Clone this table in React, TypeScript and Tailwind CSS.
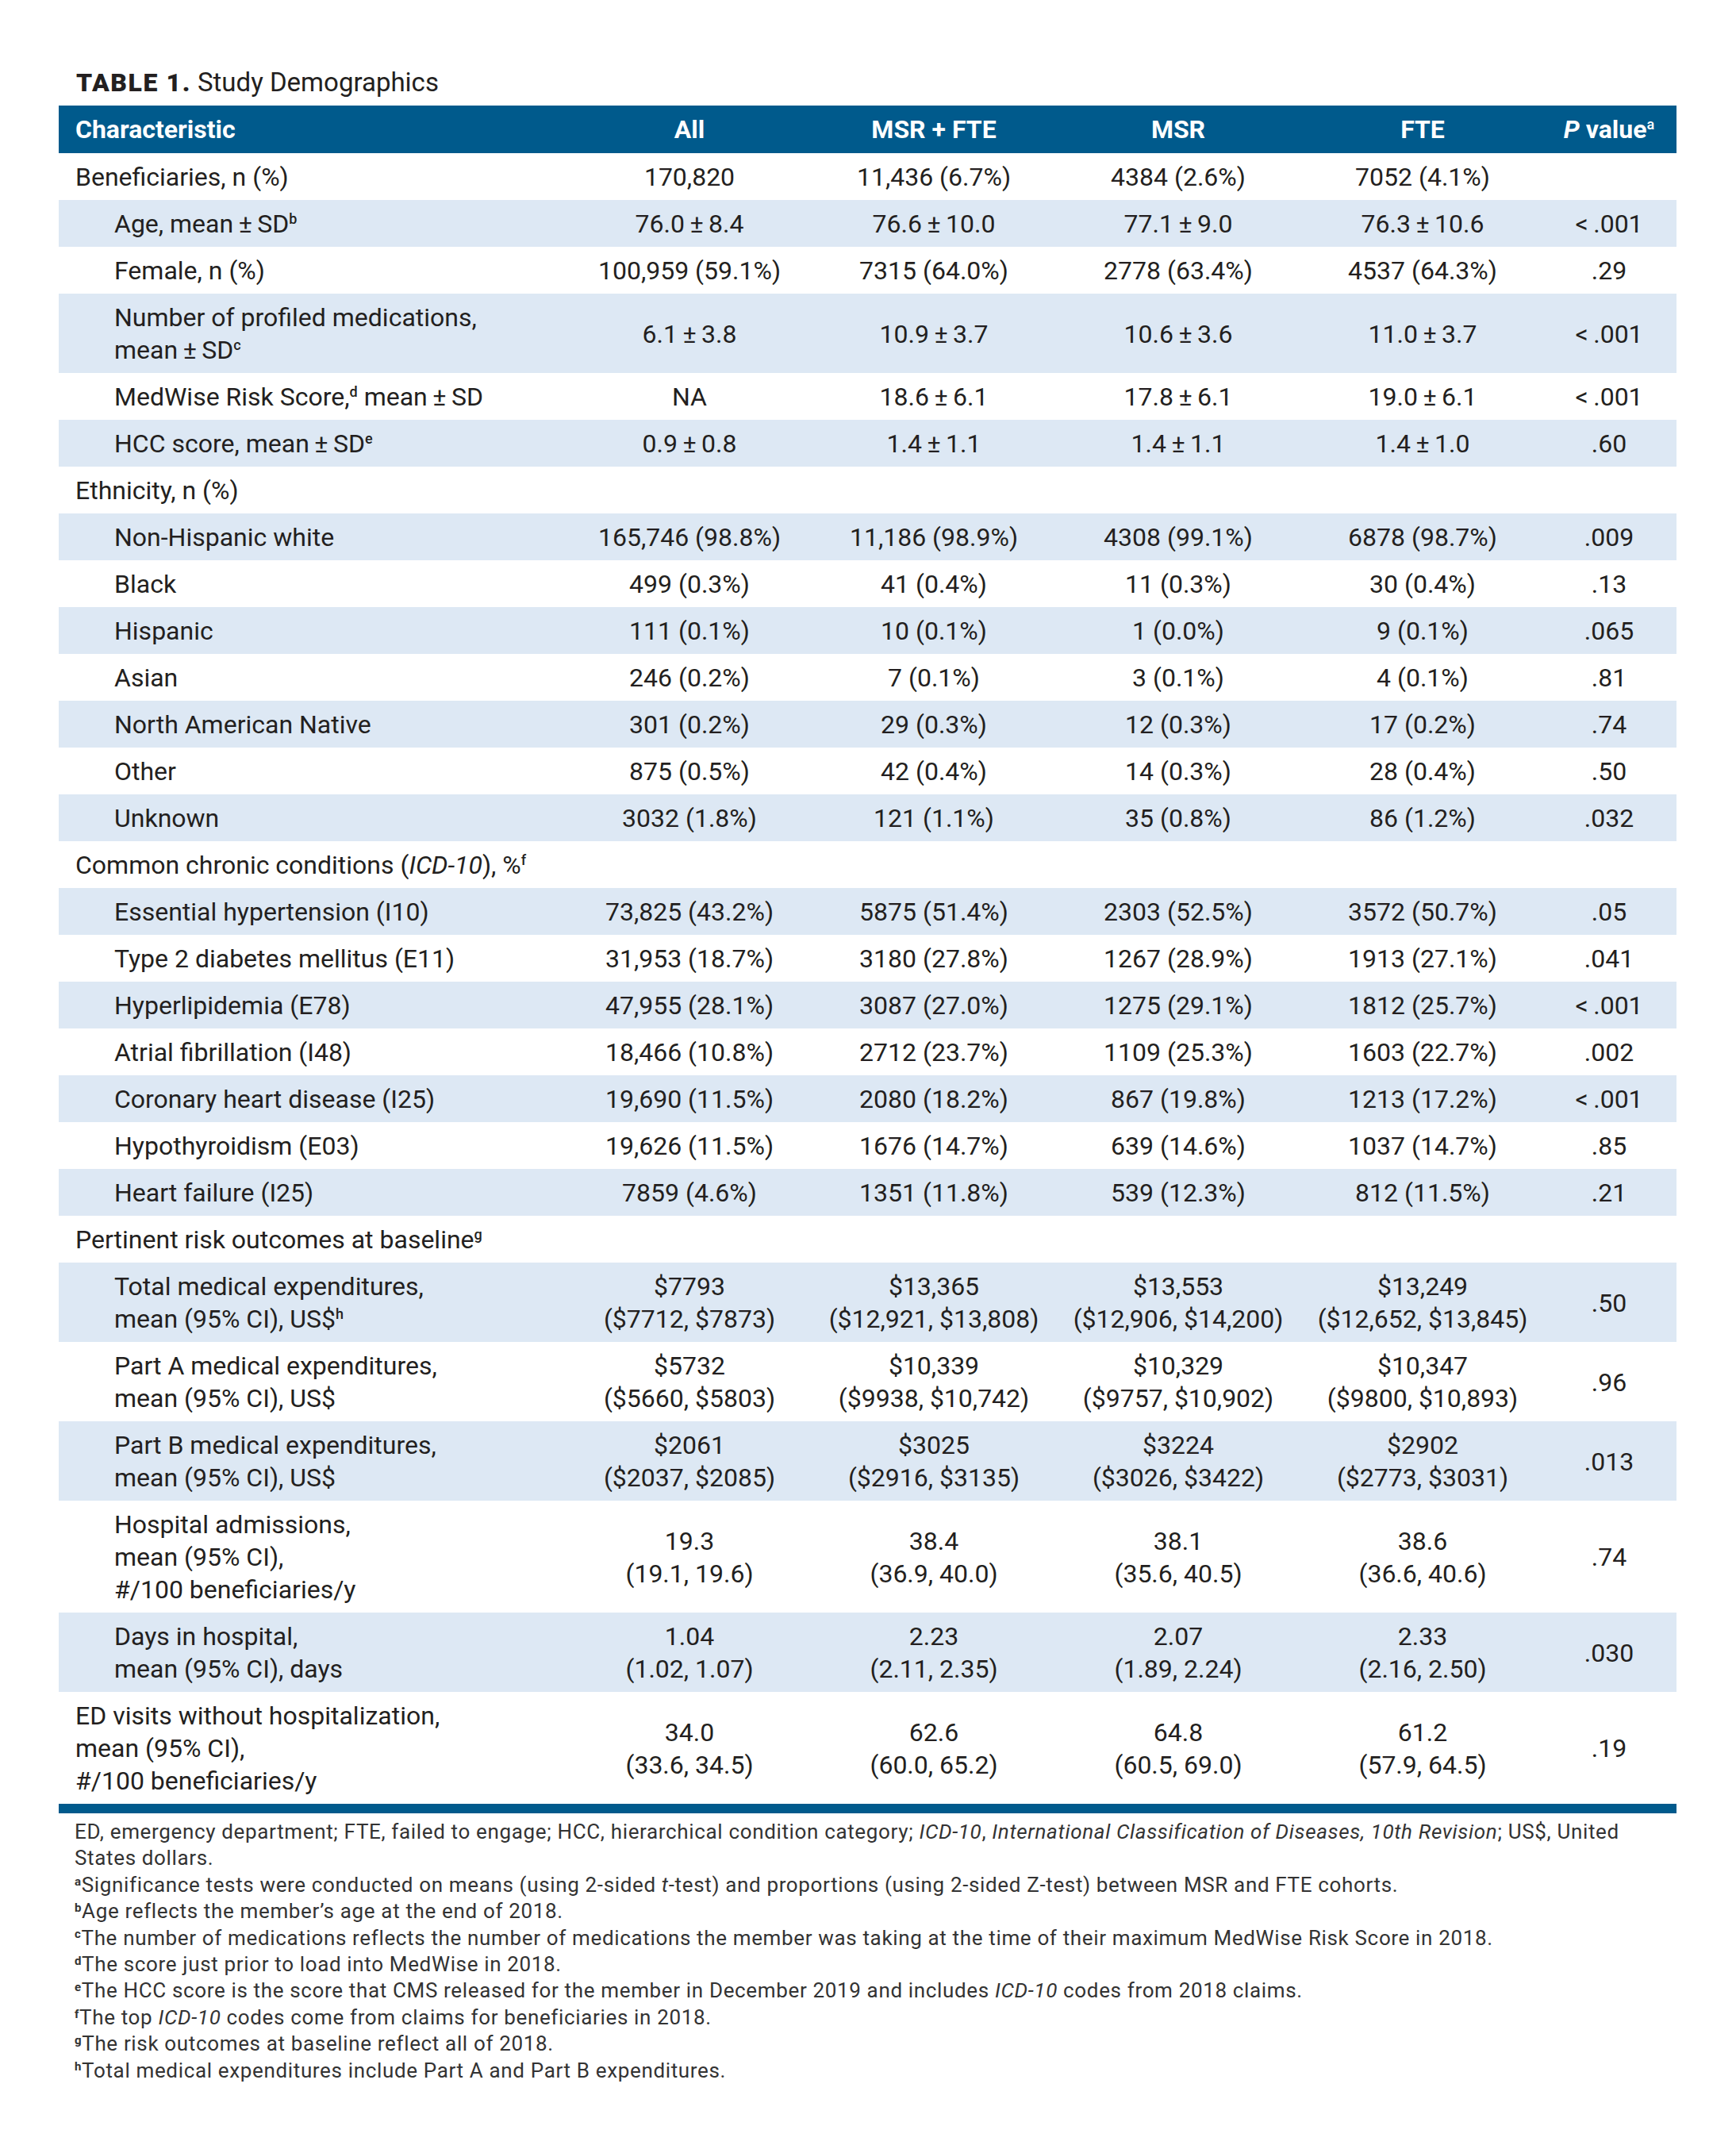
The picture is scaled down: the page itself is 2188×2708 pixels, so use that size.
import React from "react";

type Cell = string | string[];
type RowData = {
  label: React.ReactNode;
  sub?: boolean;
  vals?: Cell[];
  p?: string;
};

const Sup = ({ children }: { children: React.ReactNode }) => (
  <sup className="top-[-0.62em] text-[18px] font-medium">{children}</sup>
);

const FnSup = ({ children }: { children: React.ReactNode }) => (
  <sup className="top-[-0.55em] text-[15px] font-bold">{children}</sup>
);

const pm = (a: string, b: string) => `${a}\u2009±\u2009${b}`;

const rows: RowData[] = [
  { label: "Beneficiaries, n (%)", vals: ["170,820", "11,436 (6.7%)", "4384 (2.6%)", "7052 (4.1%)"], p: "" },
  {
    label: (
      <>
        Age, mean{"\u2009±\u2009"}SD<Sup>b</Sup>
      </>
    ),
    sub: true,
    vals: [pm("76.0", "8.4"), pm("76.6", "10.0"), pm("77.1", "9.0"), pm("76.3", "10.6")],
    p: "<\u2009.001",
  },
  { label: "Female, n (%)", sub: true, vals: ["100,959 (59.1%)", "7315 (64.0%)", "2778 (63.4%)", "4537 (64.3%)"], p: ".29" },
  {
    label: (
      <>
        Number of profiled medications,
        <br />
        mean{"\u2009±\u2009"}SD<Sup>c</Sup>
      </>
    ),
    sub: true,
    vals: [pm("6.1", "3.8"), pm("10.9", "3.7"), pm("10.6", "3.6"), pm("11.0", "3.7")],
    p: "<\u2009.001",
  },
  {
    label: (
      <>
        MedWise Risk Score,<Sup>d</Sup> mean{"\u2009±\u2009"}SD
      </>
    ),
    sub: true,
    vals: ["NA", pm("18.6", "6.1"), pm("17.8", "6.1"), pm("19.0", "6.1")],
    p: "<\u2009.001",
  },
  {
    label: (
      <>
        HCC score, mean{"\u2009±\u2009"}SD<Sup>e</Sup>
      </>
    ),
    sub: true,
    vals: [pm("0.9", "0.8"), pm("1.4", "1.1"), pm("1.4", "1.1"), pm("1.4", "1.0")],
    p: ".60",
  },
  { label: "Ethnicity, n (%)" },
  { label: "Non-Hispanic white", sub: true, vals: ["165,746 (98.8%)", "11,186 (98.9%)", "4308 (99.1%)", "6878 (98.7%)"], p: ".009" },
  { label: "Black", sub: true, vals: ["499 (0.3%)", "41 (0.4%)", "11 (0.3%)", "30 (0.4%)"], p: ".13" },
  { label: "Hispanic", sub: true, vals: ["111 (0.1%)", "10 (0.1%)", "1 (0.0%)", "9 (0.1%)"], p: ".065" },
  { label: "Asian", sub: true, vals: ["246 (0.2%)", "7 (0.1%)", "3 (0.1%)", "4 (0.1%)"], p: ".81" },
  { label: "North American Native", sub: true, vals: ["301 (0.2%)", "29 (0.3%)", "12 (0.3%)", "17 (0.2%)"], p: ".74" },
  { label: "Other", sub: true, vals: ["875 (0.5%)", "42 (0.4%)", "14 (0.3%)", "28 (0.4%)"], p: ".50" },
  { label: "Unknown", sub: true, vals: ["3032 (1.8%)", "121 (1.1%)", "35 (0.8%)", "86 (1.2%)"], p: ".032" },
  {
    label: (
      <>
        Common chronic conditions (<i>ICD-10</i>), %<Sup>f</Sup>
      </>
    ),
  },
  { label: "Essential hypertension (I10)", sub: true, vals: ["73,825 (43.2%)", "5875 (51.4%)", "2303 (52.5%)", "3572 (50.7%)"], p: ".05" },
  { label: "Type 2 diabetes mellitus (E11)", sub: true, vals: ["31,953 (18.7%)", "3180 (27.8%)", "1267 (28.9%)", "1913 (27.1%)"], p: ".041" },
  { label: "Hyperlipidemia (E78)", sub: true, vals: ["47,955 (28.1%)", "3087 (27.0%)", "1275 (29.1%)", "1812 (25.7%)"], p: "<\u2009.001" },
  { label: "Atrial fibrillation (I48)", sub: true, vals: ["18,466 (10.8%)", "2712 (23.7%)", "1109 (25.3%)", "1603 (22.7%)"], p: ".002" },
  { label: "Coronary heart disease (I25)", sub: true, vals: ["19,690 (11.5%)", "2080 (18.2%)", "867 (19.8%)", "1213 (17.2%)"], p: "<\u2009.001" },
  { label: "Hypothyroidism (E03)", sub: true, vals: ["19,626 (11.5%)", "1676 (14.7%)", "639 (14.6%)", "1037 (14.7%)"], p: ".85" },
  { label: "Heart failure (I25)", sub: true, vals: ["7859 (4.6%)", "1351 (11.8%)", "539 (12.3%)", "812 (11.5%)"], p: ".21" },
  {
    label: (
      <>
        Pertinent risk outcomes at baseline<Sup>g</Sup>
      </>
    ),
  },
  {
    label: (
      <>
        Total medical expenditures,
        <br />
        mean (95% CI), US$<Sup>h</Sup>
      </>
    ),
    sub: true,
    vals: [
      ["$7793", "($7712, $7873)"],
      ["$13,365", "($12,921, $13,808)"],
      ["$13,553", "($12,906, $14,200)"],
      ["$13,249", "($12,652, $13,845)"],
    ],
    p: ".50",
  },
  {
    label: (
      <>
        Part A medical expenditures,
        <br />
        mean (95% CI), US$
      </>
    ),
    sub: true,
    vals: [
      ["$5732", "($5660, $5803)"],
      ["$10,339", "($9938, $10,742)"],
      ["$10,329", "($9757, $10,902)"],
      ["$10,347", "($9800, $10,893)"],
    ],
    p: ".96",
  },
  {
    label: (
      <>
        Part B medical expenditures,
        <br />
        mean (95% CI), US$
      </>
    ),
    sub: true,
    vals: [
      ["$2061", "($2037, $2085)"],
      ["$3025", "($2916, $3135)"],
      ["$3224", "($3026, $3422)"],
      ["$2902", "($2773, $3031)"],
    ],
    p: ".013",
  },
  {
    label: (
      <>
        Hospital admissions,
        <br />
        mean (95% CI),
        <br />
        #/100 beneficiaries/y
      </>
    ),
    sub: true,
    vals: [
      ["19.3", "(19.1, 19.6)"],
      ["38.4", "(36.9, 40.0)"],
      ["38.1", "(35.6, 40.5)"],
      ["38.6", "(36.6, 40.6)"],
    ],
    p: ".74",
  },
  {
    label: (
      <>
        Days in hospital,
        <br />
        mean (95% CI), days
      </>
    ),
    sub: true,
    vals: [
      ["1.04", "(1.02, 1.07)"],
      ["2.23", "(2.11, 2.35)"],
      ["2.07", "(1.89, 2.24)"],
      ["2.33", "(2.16, 2.50)"],
    ],
    p: ".030",
  },
  {
    label: (
      <>
        ED visits without hospitalization,
        <br />
        mean (95% CI),
        <br />
        #/100 beneficiaries/y
      </>
    ),
    vals: [
      ["34.0", "(33.6, 34.5)"],
      ["62.6", "(60.0, 65.2)"],
      ["64.8", "(60.5, 69.0)"],
      ["61.2", "(57.9, 64.5)"],
    ],
    p: ".19",
  },
];

const cols = "grid grid-cols-[641px_308px_308px_308px_308px_166px] items-center";

const Row = ({ row, shaded }: { row: RowData; shaded: boolean }) => {
  const vals = row.vals ?? ["", "", "", ""];
  return (
    <div className={`${cols} pt-[10px] pb-[8px] leading-[41px] ${shaded ? "bg-[#dde8f4]" : "bg-white"}`}>
      <div className={row.sub ? "pl-[70px]" : "pl-[21px]"}>{row.label}</div>
      {vals.map((v, i) => (
        <div key={i} className="text-center whitespace-nowrap">
          {Array.isArray(v) ? v.map((line, j) => <div key={j}>{line}</div>) : v || "\u00a0"}
        </div>
      ))}
      <div className="pr-[4px] text-center">{row.p || "\u00a0"}</div>
    </div>
  );
};

export default function App() {
  return (
    <div className="min-h-[2708px] w-[2188px] bg-white pl-[74px] pt-[84px] font-['Roboto','Liberation_Sans',sans-serif] text-[#231f20]">
      <div className="mb-[9px] pl-[22px] text-[32px] leading-[40px]">
        <span className="font-black tracking-[0.05em]">TABLE 1.</span>{" "}
        <span className="text-[33px]">Study Demographics</span>
      </div>

      <div className="w-[2039px] text-[32px]">
        <div className={`${cols} h-[60px] bg-[#005a8c] font-bold text-white`}>
          <div className="pl-[21px]">Characteristic</div>
          <div className="text-center">All</div>
          <div className="text-center">MSR + FTE</div>
          <div className="text-center">MSR</div>
          <div className="text-center">FTE</div>
          <div className="pr-[4px] text-center">
            <i>P</i> value<Sup>a</Sup>
          </div>
        </div>

        {rows.map((r, i) => (
          <Row key={i} row={r} shaded={i % 2 === 1} />
        ))}

        <div className="h-[12px] bg-[#005a8c]" />
      </div>

      <div className="w-[2080px] pl-[20px] pt-[7px] text-[26px] leading-[33.4px] tracking-[0.025em] text-[#333333]">
        <div className="whitespace-nowrap">
          ED, emergency department; FTE, failed to engage; HCC, hierarchical condition category; <i>ICD-10</i>,{" "}
          <i>International Classification of Diseases, 10th Revision</i>; US$, United
        </div>
        <div>States dollars.</div>
        <div>
          <FnSup>a</FnSup>Significance tests were conducted on means (using 2-sided <i>t</i>-test) and proportions
          (using 2-sided Z-test) between MSR and FTE cohorts.
        </div>
        <div>
          <FnSup>b</FnSup>Age reflects the member’s age at the end of 2018.
        </div>
        <div>
          <FnSup>c</FnSup>The number of medications reflects the number of medications the member was taking at the
          time of their maximum MedWise Risk Score in 2018.
        </div>
        <div>
          <FnSup>d</FnSup>The score just prior to load into MedWise in 2018.
        </div>
        <div>
          <FnSup>e</FnSup>The HCC score is the score that CMS released for the member in December 2019 and includes{" "}
          <i>ICD-10</i> codes from 2018 claims.
        </div>
        <div>
          <FnSup>f</FnSup>The top <i>ICD-10</i> codes come from claims for beneficiaries in 2018.
        </div>
        <div>
          <FnSup>g</FnSup>The risk outcomes at baseline reflect all of 2018.
        </div>
        <div>
          <FnSup>h</FnSup>Total medical expenditures include Part A and Part B expenditures.
        </div>
      </div>
    </div>
  );
}
